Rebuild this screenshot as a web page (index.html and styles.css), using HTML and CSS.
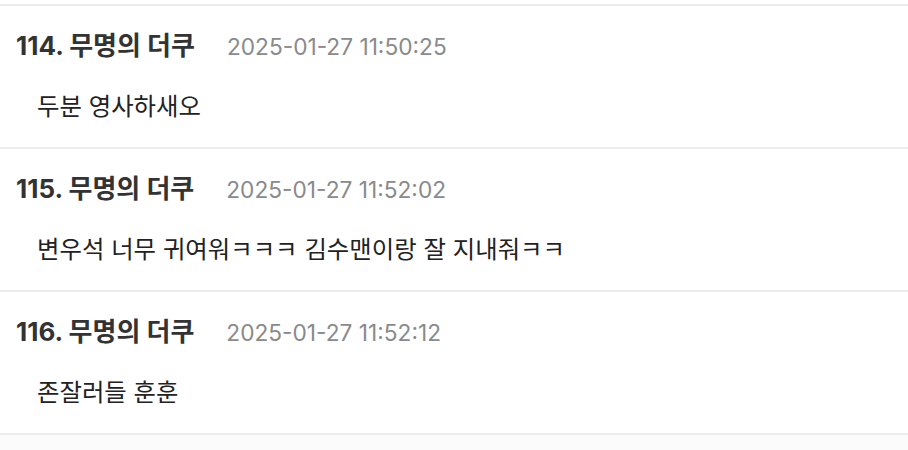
FILE: index.html
```html
<!DOCTYPE html>
<html lang="ko">

<head>
    <meta charset="UTF-8">
    <meta name="viewport" content="width=device-width, initial-scale=1.0">
    <title>댓글</title>
    <link rel="stylesheet" href="styles.css">
</head>

<body>
    <ul class="comment-list">
        <li class="comment">
            <div class="comment-head">
                <span class="comment-name">114. 무명의 더쿠</span>
                <span class="comment-date">2025-01-27 11:50:25</span>
            </div>
            <p class="comment-body">두분 영사하새오</p>
        </li>
        <li class="comment">
            <div class="comment-head">
                <span class="comment-name">115. 무명의 더쿠</span>
                <span class="comment-date">2025-01-27 11:52:02</span>
            </div>
            <p class="comment-body">변우석 너무 귀여워ㅋㅋㅋ 김수맨이랑 잘 지내줘ㅋㅋ</p>
        </li>
        <li class="comment">
            <div class="comment-head">
                <span class="comment-name">116. 무명의 더쿠</span>
                <span class="comment-date">2025-01-27 11:52:12</span>
            </div>
            <p class="comment-body">존잘러들 훈훈</p>
        </li>
    </ul>
</body>

</html>
```

FILE: styles.css
```css
:root {
    --line: #ececec;
    --name: #333333;
    --date: #8a8a8a;
    --text: #222222;
}

html {
    background: #fbfbfb;
}

body {
    margin: 0;
    font-family: Inter, 'Noto Sans CJK KR', sans-serif;
}

.comment-list {
    list-style: none;
    margin: 0;
    padding: 4px 0 0;
    background: #fff;
    border-bottom: 2px solid var(--line);
}

.comment {
    box-sizing: border-box;
    height: 143px;
    border-top: 2px solid var(--line);
    padding: 24px 16px 0;
}

.comment-head {
    display: flex;
    align-items: baseline;
    line-height: 32px;
}

.comment-name {
    font-size: 26px;
    font-weight: 700;
    color: var(--name);
}

.comment-date {
    margin-left: 32px;
    font-size: 22.7px;
    color: var(--date);
}

.comment-body {
    margin: 27px 0 0;
    padding-left: 21px;
    font-size: 24.4px;
    line-height: 32px;
    color: var(--text);
}
```
